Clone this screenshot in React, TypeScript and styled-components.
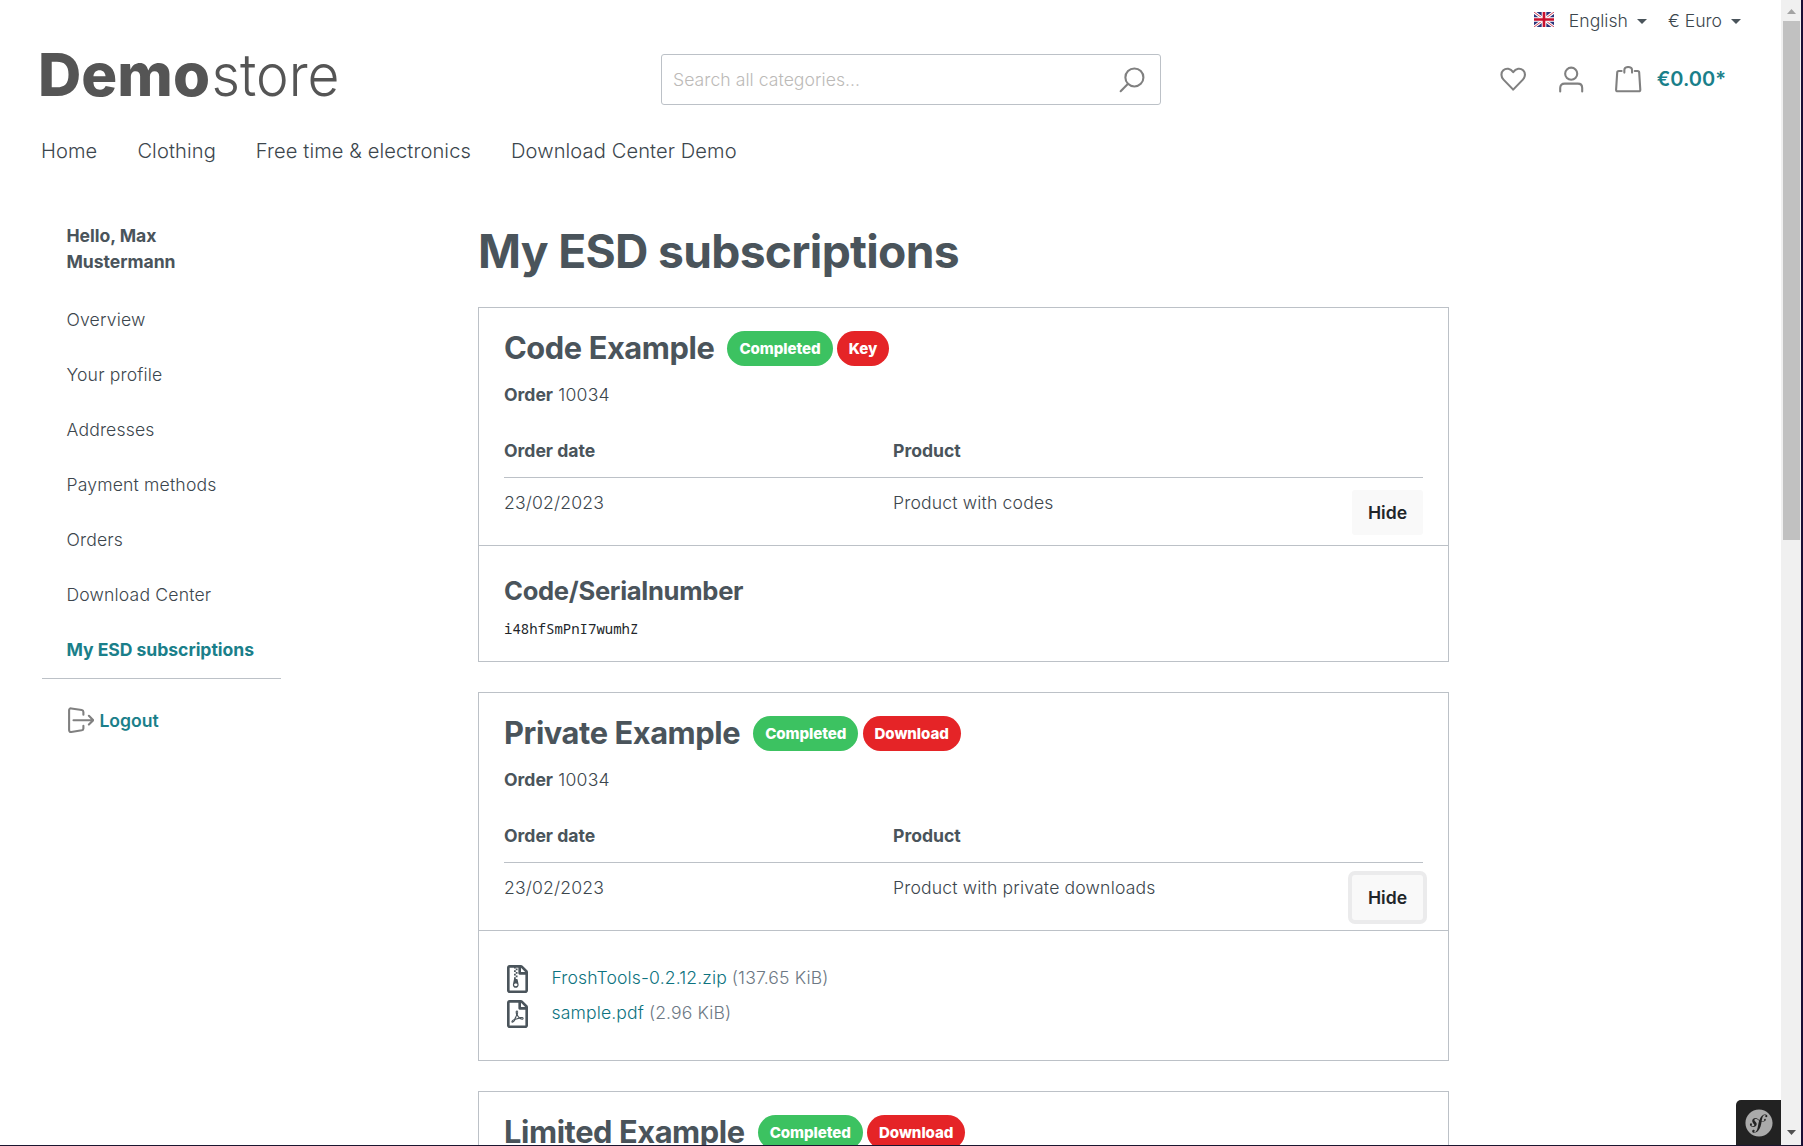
import React from 'react';
import styled, { createGlobalStyle } from 'styled-components';
import { FaRegFilePdf, FaRegFileArchive, FaSymfony } from 'react-icons/fa';

const Global = createGlobalStyle`
  * { box-sizing: border-box; }
  html, body { margin: 0; height: 1146px; overflow: hidden; background: #fff; }
  body {
    font-family: Inter, "Liberation Sans", sans-serif;
    font-size: 17.6px;
    line-height: 26.4px;
    color: #4a545b;
  }
  a { color: inherit; text-decoration: none; }
`;

const Window = styled.div`
  width: 1803px;
  height: 1146px;
  display: flex;
  overflow: hidden;
  border-right: 2px solid #190f35;
  border-bottom: 1px solid #1b1630;
`;
const Page = styled.div`
  flex: 1;
  min-width: 0;
  overflow: hidden;
  position: relative;
`;
const TopBar = styled.div`
  display: flex;
  justify-content: flex-end;
  align-items: center;
  height: 42px;
  padding-right: 40px;
  font-weight: 300;
  color: #3c464d;
`;
const Dropdown = styled.div`
  display: flex;
  align-items: center;
  margin-left: 21px;
`;
const Flag = styled.svg`
  width: 20px;
  height: 15px;
  margin-right: 15px;
  margin-top: -3px;
`;
const Caret = styled.span`
  width: 0;
  height: 0;
  margin-left: 9px;
  border-left: 5px solid transparent;
  border-right: 5px solid transparent;
  border-top: 5px solid #4a545b;
`;
const Header = styled.header`
  display: grid;
  grid-template-columns: 621px 500px 1fr;
  align-items: center;
  height: 75px;
  padding: 0 55px 0 40px;
`;
const Logo = styled.svg`
  width: 310px;
  height: 60px;
  display: block;
  overflow: visible;
`;
const Search = styled.div`
  display: flex;
  align-items: center;
  justify-content: space-between;
  height: 51px;
  border: 1px solid #bcc1c7;
  border-radius: 3px;
  padding: 1px 15px 0 11px;
  color: #bcbab8;
  font-weight: 300;
  letter-spacing: 0.05px;
`;
const Actions = styled.div`
  display: flex;
  justify-content: flex-end;
  align-items: center;
`;
const Icon = styled.svg<{ $gap?: number }>`
  width: 26.4px;
  height: 26.4px;
  flex: none;
  fill: none;
  stroke: #808080;
  stroke-width: 1.9;
  stroke-linecap: round;
  stroke-linejoin: round;
  margin-right: ${(p) => p.$gap ?? 0}px;
`;
const Total = styled.span`
  color: #1a7f8a;
  font-size: 20px;
  font-weight: 600;
`;
const Nav = styled.nav`
  display: flex;
  gap: 40px;
  padding: 19px 41px 0;
  height: 106px;
  font-size: 20.1px;
  line-height: 30px;
  font-weight: 300;
  letter-spacing: 0.1px;
  color: #3c464d;
`;
const Content = styled.main`
  display: flex;
`;
const Sidebar = styled.aside`
  width: 239px;
  margin-left: 42px;
  flex: none;
`;
const Greeting = styled.div`
  padding: 0 90px 0 24.5px;
  margin-bottom: 17px;
  font-weight: 700;
  letter-spacing: -0.04px;
`;
const SideLink = styled.a<{ $active?: boolean }>`
  display: block;
  height: 55px;
  padding: 14px 0 0 24.5px;
  white-space: nowrap;
  font-weight: ${(p) => (p.$active ? 700 : 300)};
  letter-spacing: ${(p) => (p.$active ? '-0.05px' : '0.16px')};
  color: ${(p) => (p.$active ? '#1a7f8a' : '#3c464d')};
`;
const Logout = styled.a`
  display: flex;
  align-items: center;
  gap: 5px;
  border-top: 1px solid #bcc1c7;
  padding: 28px 0 0 26px;
  color: #1a7f8a;
  font-weight: 600;
  span { padding-top: 1px; }
`;
const Main = styled.section`
  width: 971px;
  margin-left: 197px;
`;
const Title = styled.h1`
  margin: 0 0 28px;
  font-size: 46.2px;
  line-height: 56px;
  font-weight: 700;
  letter-spacing: -0.69px;
`;
const Card = styled.article`
  border: 1px solid #bcc1c7;
  margin-bottom: 30px;
`;
const Head = styled.div`
  height: 237px;
  padding: 22px 25px 0;
`;
const TitleRow = styled.div`
  display: flex;
  align-items: center;
  height: 36px;
  margin-bottom: 16px;
`;
const Name = styled.h2`
  margin: 0 13px 0 0;
  font-size: 30.8px;
  line-height: 36px;
  font-weight: 700;
  letter-spacing: -0.41px;
`;
const Badge = styled.span<{ $tone: 'green' | 'red' }>`
  height: 35px;
  padding: 0 12px;
  margin-right: 4.2px;
  border-radius: 18px;
  line-height: 35px;
  font-size: 15.1px;
  font-weight: 800;
  letter-spacing: -0.08px;
  color: #fff;
  background: ${(p) => (p.$tone === 'green' ? '#3cc261' : '#e52427')};
`;
const Columns = styled.div<{ $head?: boolean }>`
  display: grid;
  grid-template-columns: 389px 1fr auto;
  align-items: start;
  font-weight: ${(p) => (p.$head ? 700 : 300)};
  letter-spacing: ${(p) => (p.$head ? '0' : '0.16px')};
  color: ${(p) => (p.$head ? 'inherit' : '#3c464d')};
  ${(p) => (p.$head ? 'margin-top: 30px; height: 40px; border-bottom: 1px solid #bcc1c7;' : 'padding-top: 12px;')}
`;
const Order = styled.div`
  font-weight: 300;
  letter-spacing: 0.25px;
  color: #3c464d;
  b { font-weight: 700; letter-spacing: 0; color: #4a545b; }
`;
const Button = styled.button<{ $focus?: boolean }>`
  width: 71px;
  height: 45px;
  border: 0;
  padding: 0 0 1px;
  border-radius: 3px;
  background: #f9f9f9;
  color: #212529;
  font: 600 17.6px Inter, sans-serif;
  box-shadow: ${(p) => (p.$focus ? '0 0 0 4px #ebebec' : 'none')};
`;
const Body = styled.div<{ $height: number }>`
  height: ${(p) => p.$height}px;
  border-top: 1px solid #bcc1c7;
  padding: 29px 25px 0;
`;
const SubTitle = styled.h3`
  margin: 0 0 10px;
  font-size: 25.6px;
  line-height: 32px;
  font-weight: 700;
  letter-spacing: -0.3px;
`;
const Code = styled.pre`
  margin: 0;
  color: #212529;
  font: 14px/24px "Noto Sans Mono", "DejaVu Sans Mono", monospace;
`;
const FileList = styled.div`
  padding-top: 1px;
`;
const FileRow = styled.div`
  display: flex;
  align-items: center;
  height: 35px;
  font-weight: 300;
  letter-spacing: 0.12px;
  svg { width: 27px; height: 28px; margin-right: 20.5px; color: #4a545b; }
`;
const FileLink = styled.a`
  color: #0d7380;
  margin-right: 5px;
`;
const Size = styled.span`
  color: #6d7884;
`;
const Scrollbar = styled.div`
  width: 20px;
  flex: none;
  background: #f0f0f0;
  display: flex;
  flex-direction: column;
  align-items: center;
  justify-content: space-between;
`;
const Thumb = styled.div`
  width: 17px;
  height: 519px;
  background: #c1c1c1;
  margin-bottom: auto;
`;
const Arrow = styled.svg`
  width: 17px;
  height: 21px;
`;
const Toolbar = styled.div`
  position: absolute;
  right: 0;
  bottom: 0;
  width: 45px;
  height: 45px;
  border-top-left-radius: 5px;
  background: #222;
  display: flex;
  align-items: center;
  justify-content: center;
  color: #aaa;
`;

type Product = { name: string; kind: string; product: string; focus?: boolean; height: number; body?: React.ReactNode };

const items: Product[] = [
  {
    name: 'Code Example', kind: 'Key', product: 'Product with codes', height: 116,
    body: (<><SubTitle>Code/Serialnumber</SubTitle><Code>i48hfSmPnI7wumhZ</Code></>),
  },
  {
    name: 'Private Example', kind: 'Download', product: 'Product with private downloads', focus: true, height: 130,
    body: (
      <FileList>
        <FileRow><FaRegFileArchive /><FileLink href="#">FroshTools-0.2.12.zip</FileLink><Size>(137.65 KiB)</Size></FileRow>
        <FileRow><FaRegFilePdf /><FileLink href="#">sample.pdf</FileLink><Size>(2.96 KiB)</Size></FileRow>
      </FileList>
    ),
  },
];

const links = ['Overview', 'Your profile', 'Addresses', 'Payment methods', 'Orders', 'Download Center'];

export default function App() {
  return (
    <Window>
      <Global />
      <Page>
        <TopBar>
          <Dropdown>
            <Flag viewBox="0 0 60 45" preserveAspectRatio="none">
              <rect width="60" height="45" fill="#29337a" />
              <path d="M0 0L60 45M60 0L0 45" stroke="#fff" strokeWidth="9" />
              <path d="M0 0L60 45M60 0L0 45" stroke="#d0455b" strokeWidth="3" />
              <path d="M30 0V45M0 22.5H60" stroke="#fff" strokeWidth="14" />
              <path d="M30 0V45M0 22.5H60" stroke="#c8102e" strokeWidth="8" />
            </Flag>
            English
            <Caret />
          </Dropdown>
          <Dropdown>€ Euro<Caret /></Dropdown>
        </TopBar>
        <Header>
          <Logo viewBox="0 0 310 60">
            <text x="-2" y="46" fontFamily="Inter" fontWeight="800" fontSize="59" fill="#555" textLength="172" lengthAdjust="spacingAndGlyphs">Demo</text>
            <text x="171.500" y="46" fontFamily="Inter" fontWeight="300" fontSize="59" fill="#555" textLength="128" lengthAdjust="spacingAndGlyphs">store</text>
          </Logo>
          <Search>
            Search all categories...
            <Icon viewBox="0 0 24 24"><circle cx="14" cy="9.500" r="8.2" /><path d="M8 15.500L1.5 22" /></Icon>
          </Search>
          <Actions>
            <Icon $gap={31.5} viewBox="0 0 24 24"><path d="M12 21.5L3.2 12.4C.7 9.800.7 6 3 3.900 5.500 1.600 9.500 2 12 5.500 14.500 2 18.500 1.600 21 3.900 23.300 6 23.300 9.800 20.800 12.400Z" /></Icon>
            <Icon $gap={31} viewBox="0 0 24 24"><circle cx="12" cy="7" r="5.500" /><path d="M2 23.200V20C2 17.500 3.500 16 6 16H18C20.500 16 22 17.500 22 20V23.200" /></Icon>
            <Icon $gap={15} viewBox="0 0 24 24"><path d="M6 4.500H3.500C2.500 4.500 2 5 2 6L1 21.500C1 22.500 1.500 23 2.500 23H21.500C22.500 23 23 22.500 23 21.500L22 6C22 5 21.500 4.500 20.500 4.500H18M8.500 6V4C8.500 -.1 15.500 -.1 15.500 4V6" /></Icon>
            <Total>€0.00*</Total>
          </Actions>
        </Header>
        <Nav>
          <a href="#">Home</a><a href="#">Clothing</a><a href="#">Free time &amp; electronics</a><a href="#">Download Center Demo</a>
        </Nav>
        <Content>
          <Sidebar>
            <Greeting>Hello, Max Mustermann</Greeting>
            {links.map((l) => <SideLink key={l} href="#">{l}</SideLink>)}
            <SideLink $active href="#">My ESD subscriptions</SideLink>
            <Logout href="#">
              <Icon viewBox="0 0 24 24"><path d="M14 7V4.500C14 3.500 13.500 3 12.500 2.800L3 1.300C1.800 1.100 1 1.800 1 3V21C1 22.200 1.800 22.900 3 22.700L12.500 21.200C13.500 21 14 20.500 14 19.500V17M5 12H23M19 8L23 12 19 16" /></Icon>
              <span>Logout</span>
            </Logout>
          </Sidebar>
          <Main>
            <Title>My ESD subscriptions</Title>
            {items.map((it) => (
              <Card key={it.name}>
                <Head>
                  <TitleRow><Name>{it.name}</Name><Badge $tone="green">Completed</Badge><Badge $tone="red">{it.kind}</Badge></TitleRow>
                  <Order><b>Order</b> 10034</Order>
                  <Columns $head><span>Order date</span><span>Product</span></Columns>
                  <Columns><span>23/02/2023</span><span>{it.product}</span><Button $focus={it.focus}>Hide</Button></Columns>
                </Head>
                <Body $height={it.height}>{it.body}</Body>
              </Card>
            ))}
            <Card>
              <Head>
                <TitleRow><Name>Limited Example</Name><Badge $tone="green">Completed</Badge><Badge $tone="red">Download</Badge></TitleRow>
              </Head>
            </Card>
          </Main>
        </Content>
        <Toolbar><FaSymfony size={28} /></Toolbar>
      </Page>
      <Scrollbar>
        <Arrow viewBox="0 0 17 21"><path d="M4 14L8.500 9 13 14Z" fill="#a3a3a3" /></Arrow>
        <Thumb />
        <Arrow viewBox="0 0 17 21"><path d="M4 6L8.500 11 13 6Z" fill="#505050" /></Arrow>
      </Scrollbar>
    </Window>
  );
}
